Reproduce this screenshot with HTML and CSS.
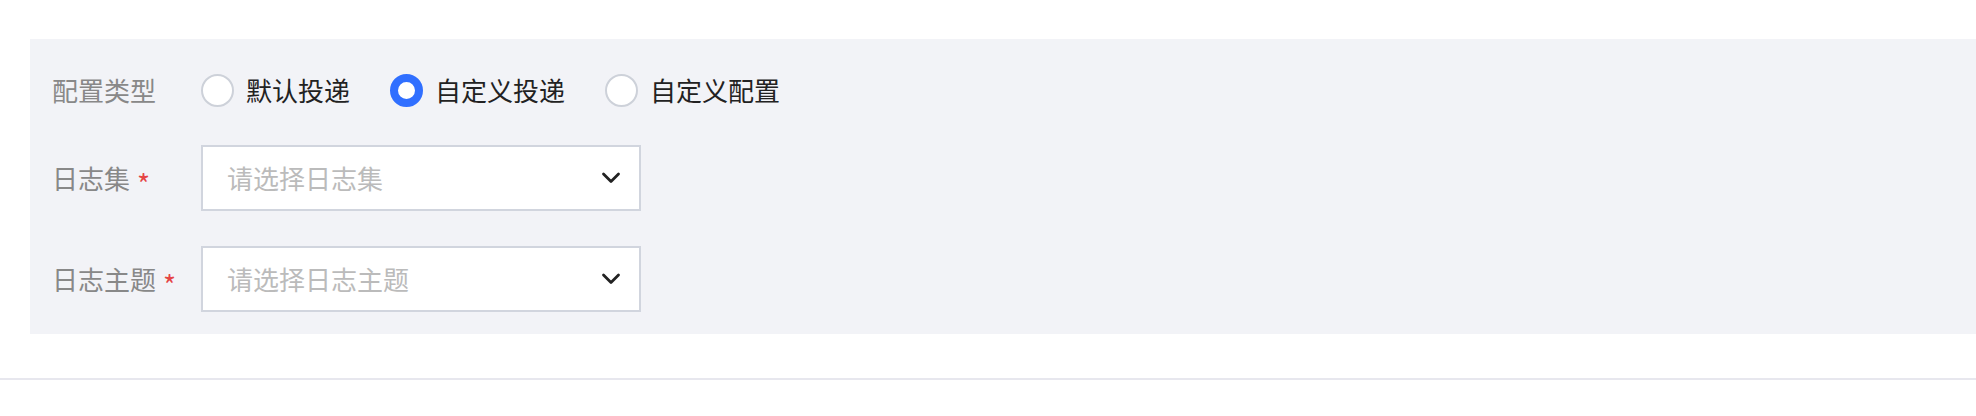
FILE: index.html
```html
<!DOCTYPE html>
<html lang="zh-CN">
<head>
    <meta charset="UTF-8">
    <meta name="viewport" content="width=device-width, initial-scale=1.0">
    <title>投递配置</title>
    <link rel="stylesheet" href="styles.css">
</head>
<body>
    <div class="panel">
        <div class="form-row row-type">
            <label class="form-label">配置类型</label>
            <div class="radio-group">
                <label class="radio">
                    <span class="radio-dot"></span>
                    <span class="radio-text">默认投递</span>
                </label>
                <label class="radio checked">
                    <span class="radio-dot"></span>
                    <span class="radio-text">自定义投递</span>
                </label>
                <label class="radio">
                    <span class="radio-dot"></span>
                    <span class="radio-text">自定义配置</span>
                </label>
            </div>
        </div>
        <div class="form-row">
            <label class="form-label">日志集<span class="required">*</span></label>
            <div class="select">
                <span class="placeholder">请选择日志集</span>
                <svg class="arrow" width="20" height="12" viewBox="0 0 20 12">
                    <path d="M2.5 2 L10 9.5 L17.5 2" fill="none" stroke="#222" stroke-width="2.8" stroke-linecap="round" stroke-linejoin="round"/>
                </svg>
            </div>
        </div>
        <div class="form-row">
            <label class="form-label">日志主题<span class="required">*</span></label>
            <div class="select">
                <span class="placeholder">请选择日志主题</span>
                <svg class="arrow" width="20" height="12" viewBox="0 0 20 12">
                    <path d="M2.5 2 L10 9.5 L17.5 2" fill="none" stroke="#222" stroke-width="2.8" stroke-linecap="round" stroke-linejoin="round"/>
                </svg>
            </div>
        </div>
    </div>
    <div class="divider"></div>
</body>
</html>
```

FILE: styles.css
```css
body {
    margin: 0;
    padding: 39px 0 0 0;
    background: #fff;
    font-family: "Noto Sans CJK SC", "Noto Sans", sans-serif;
    font-size: 26px;
    overflow: hidden;
}
.panel {
    margin-left: 30px;
    background: #f2f3f7;
    padding: 31px 0 22px 22px;
    display: flex;
    flex-direction: column;
    gap: 35px;
}
.form-row {
    display: flex;
    align-items: center;
    height: 66px;
}
.row-type {
    height: 40px;
}
.form-label {
    width: 149px;
    flex-shrink: 0;
    color: #888;
    line-height: 1;
    display: flex;
    align-items: center;
}
.required {
    color: #e54545;
    font-size: 28px;
    margin-left: 7px;
    position: relative;
    top: 5px;
}
.radio-group {
    display: flex;
    align-items: center;
}
.radio {
    display: flex;
    align-items: center;
    margin-right: 40px;
    color: #222;
}
.radio-dot {
    width: 29px;
    height: 29px;
    border: 2px solid #cdd1d9;
    border-radius: 50%;
    background: #fff;
    margin-right: 12px;
}
.radio.checked .radio-dot {
    width: 17px;
    height: 17px;
    border: 8px solid #306fff;
}
.radio-text {
    line-height: 1;
}
.select {
    height: 62px;
    border: 2px solid #d1d5de;
    background: #fff;
    display: flex;
    align-items: center;
    justify-content: space-between;
    padding: 0 18px 0 24px;
    box-sizing: content-box;
    width: 394px;
}
.placeholder {
    color: #bbb;
    line-height: 1;
}
.divider {
    margin-top: 44px;
    height: 2px;
    background: #e7e7ee;
}
```
